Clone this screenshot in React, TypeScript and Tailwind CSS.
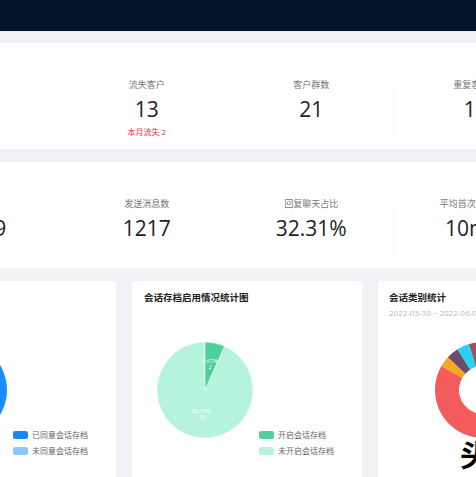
import React from "react";

type Stat = { label: string; value: string; sub?: string; divider?: boolean };

const row1: Stat[] = [
  { label: "新增客户", value: "45" },
  { label: "流失客户", value: "13", sub: "本月流失 2" },
  { label: "客户群数", value: "21", divider: true },
  { label: "重复客户数", value: "11" },
];

const row2: Stat[] = [
  { label: "聊天总数", value: "2409" },
  { label: "发送消息数", value: "1217" },
  { label: "回复聊天占比", value: "32.31%", divider: true },
  { label: "平均首次回复时长", value: "10min" },
];

function StatCard({ items }: { items: Stat[] }) {
  return (
    <div className="h-[106px] bg-white rounded-[4px] flex pl-[14px]">
      {items.map((s, i) => (
        <div
          key={i}
          className={
            "w-[164.5px] shrink-0 flex flex-col items-center pt-[35px] " +
            (s.divider ? "relative" : "")
          }
        >
          <div className="text-[9px] leading-[14px] text-[#777] whitespace-nowrap">{s.label}</div>
          <div className="mt-[4px] text-[21px] leading-[26px] text-[#222] whitespace-nowrap">{s.value}</div>
          {s.sub && (
            <div className="mt-[4px] text-[8px] leading-[12px] text-[#e8344e] whitespace-nowrap">{s.sub}</div>
          )}
          {s.divider && (
            <div className="absolute right-0 top-[45px] h-[50px] w-px bg-[#f8f8f9]" />
          )}
        </div>
      ))}
    </div>
  );
}

function pt(cx: number, cy: number, r: number, deg: number) {
  const a = (deg * Math.PI) / 180;
  return [cx + r * Math.sin(a), cy - r * Math.cos(a)];
}

function donutSeg(a0: number, a1: number, ro: number, ri: number) {
  const c = 48;
  const [x0, y0] = pt(c, c, ro, a0);
  const [x1, y1] = pt(c, c, ro, a1);
  const [x2, y2] = pt(c, c, ri, a1);
  const [x3, y3] = pt(c, c, ri, a0);
  const large = a1 - a0 > 180 ? 1 : 0;
  return `M${x0} ${y0} A${ro} ${ro} 0 ${large} 1 ${x1} ${y1} L${x2} ${y2} A${ri} ${ri} 0 ${large} 0 ${x3} ${y3} Z`;
}

function Legend({ items }: { items: { color: string; label: string }[] }) {
  return (
    <div className="flex flex-col gap-[4px] mt-[87px] ml-[6px]">
      {items.map((it, i) => (
        <div key={i} className="flex items-center h-[12px]">
          <div className={"w-[15px] h-[8px] rounded-[2px] " + it.color} />
          <span className="ml-[4px] text-[8px] leading-[12px] text-[#666] whitespace-nowrap">{it.label}</span>
        </div>
      ))}
    </div>
  );
}

export default function App() {
  const segs: [number, number, string][] = [
    [30, 300, "#f45b5b"],
    [300, 313, "#f7a81b"],
    [313, 328, "#6b4c69"],
    [328, 343, "#27d3f4"],
    [343, 356, "#a24f5f"],
    [356, 390, "#7cb5ec"],
  ];
  return (
    <div className="w-[476px] h-[477px] overflow-hidden bg-[#f0f2f5] relative font-['Open_Sans','Noto_Sans_CJK_SC',sans-serif]">
      <div className="h-[32px] bg-[#03152a] border-b border-[#e4e9f3]" />
      <div className="ml-[-114px] w-[722px] pt-[11px] flex flex-col gap-[13px]">
        <StatCard items={row1} />
        <StatCard items={row2} />
        <div className="flex gap-[16px]">
          {/* left card */}
          <div className="w-[230px] h-[210px] shrink-0 bg-white rounded-[4px] pt-[10px] pl-[12px]">
            <div className="text-[9.5px] leading-[14px] font-bold text-[#222] whitespace-nowrap">会话存档统计图</div>
            <div className="flex mt-[37px]">
              <svg width="96" height="96" viewBox="0 0 96 96" className="ml-[13px] shrink-0">
                <circle cx="48" cy="48" r="48" fill="#1a8cff" />
              </svg>
              <Legend
                items={[
                  { color: "bg-[#1a86f5]", label: "已同意会话存档" },
                  { color: "bg-[#8cc8fb]", label: "未同意会话存档" },
                ]}
              />
            </div>
          </div>
          {/* middle card */}
          <div className="w-[230px] h-[210px] shrink-0 bg-white rounded-[4px] pt-[10px] pl-[12px]">
            <div className="text-[9.5px] leading-[14px] font-bold text-[#222] whitespace-nowrap">会话存档启用情况统计图</div>
            <div className="flex mt-[37px]">
              <svg width="96" height="96" viewBox="0 0 96 96" className="ml-[13px] shrink-0">
                <path d="M48 48 L67.52 4.15 A48 48 0 1 1 48 0 Z" fill="#b6f3dc" stroke="#fff" strokeWidth="0.6" />
                <path d="M48 48 L48 0 A48 48 0 0 1 67.52 4.15 Z" fill="#4fcf9c" stroke="#fff" strokeWidth="0.6" />
                <text x="53" y="21" fontSize="5.5" fill="#fff" textAnchor="middle" fontFamily="Open Sans">6.67%</text>
                <text x="53" y="27" fontSize="5.5" fill="#fff" textAnchor="middle" fontFamily="Open Sans">2</text>
                <text x="44" y="71" fontSize="5.5" fill="#fff" textAnchor="middle" fontFamily="Open Sans">93.33%</text>
                <text x="45" y="77" fontSize="5.5" fill="#fff" textAnchor="middle" fontFamily="Open Sans">28</text>
              </svg>
              <Legend
                items={[
                  { color: "bg-[#4fcf9c]", label: "开启会话存档" },
                  { color: "bg-[#b6f3dc]", label: "未开启会话存档" },
                ]}
              />
            </div>
          </div>
          {/* right card */}
          <div className="w-[230px] h-[210px] shrink-0 bg-white rounded-[4px] pt-[10px] pl-[11px]">
            <div className="text-[9.5px] leading-[14px] font-bold text-[#222] whitespace-nowrap">会话类别统计</div>
            <div className="mt-[2px] text-[8px] leading-[12px] text-[#bbb] whitespace-nowrap">2022-05-30 ~ 2022-06-05</div>
            <div className="flex mt-[23px]">
              <svg width="96" height="96" viewBox="0 0 96 96" className="ml-[46px] shrink-0">
                {segs.map(([a, b, c], i) => (
                  <path key={i} d={donutSeg(a, b, 48, 24)} fill={c} />
                ))}
              </svg>
            </div>
          </div>
        </div>
      </div>
      <div className="absolute left-[460px] top-[436px] text-[30px] leading-[34px] font-bold text-black font-['Noto_Sans_CJK_SC',sans-serif] whitespace-nowrap">
        头条
      </div>
    </div>
  );
}
